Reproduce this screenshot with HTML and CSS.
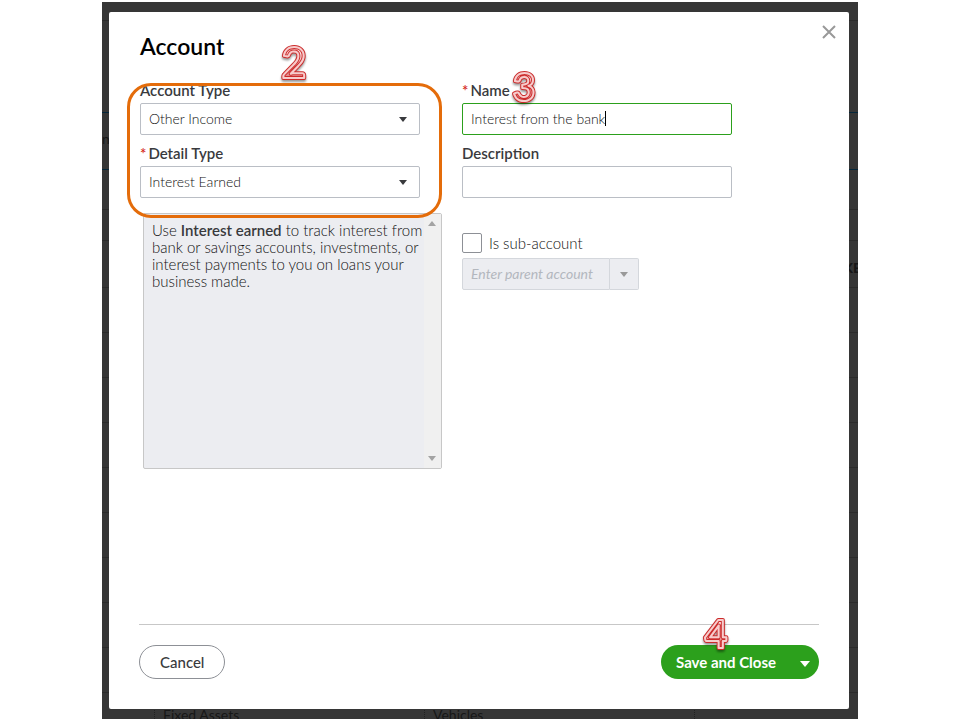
FILE: index.html
```html
<!DOCTYPE html>
<html lang="en">
<head>
<meta charset="utf-8">
<title>Account</title>
<link rel="stylesheet" href="styles.css">
</head>
<body>
<main class="stage">
  <div class="backdrop">
    <div class="row row-xs"></div>
    <div class="row row-xl blue"></div>
    <div class="row row-lg blue edge"><span>n</span></div>
    <div class="row row-md"></div>
    <div class="row row-sm"></div>
    <div class="row heading"><b>KE</b></div>
    <div class="row"></div>
    <div class="row"></div>
    <div class="row"></div>
    <div class="row"></div>
    <div class="row"></div>
    <div class="row"></div>
    <div class="row"></div>
    <div class="row"></div>
    <div class="row"></div>
    <div class="row cells"><span></span><span>Fixed Assets</span><span>Vehicles</span><span></span></div>
  </div>
  <form class="modal" role="dialog" aria-labelledby="title">
    <header class="modal-head">
      <h1 id="title">Account</h1>
      <span class="step step-2"><svg viewBox="0 0 40 52" aria-hidden="true"><defs><linearGradient id="ink" x1="0" y1="0" x2="0" y2="1"><stop offset="0.3" stop-color="#fde4e4"/><stop offset="1" stop-color="#d86060"/></linearGradient></defs><text class="outer" x="20" y="40">2</text><text class="inner" x="20" y="40">2</text></svg></span>
      <button class="close" type="button" aria-label="Close"><svg viewBox="0 0 14 14"><path d="M1 1l12 12M13 1L1 13"/></svg></button>
    </header>
    <div class="fields">
      <div class="column">
        <div class="types">
          <div class="field">
            <label for="type">Account Type</label>
            <span class="picker"><select id="type"><option>Other Income</option></select></span>
          </div>
          <div class="field">
            <label for="detail"><i>*</i>Detail Type</label>
            <span class="picker"><select id="detail"><option>Interest Earned</option></select></span>
          </div>
        </div>
        <div class="note">
          <p>Use <b>Interest earned</b> to track interest from bank or savings accounts, investments, or interest payments to you on loans your business made.</p>
          <div class="scroll"><svg viewBox="0 0 8 5"><path d="M0 5l4-5 4 5z"/></svg><svg viewBox="0 0 8 5"><path d="M0 0h8L4 5z"/></svg></div>
        </div>
      </div>
      <div class="column">
        <div class="field">
          <label for="name"><i>*</i>Name</label>
          <span class="entry"><input class="focused" id="name" type="text" value="Interest from the bank"><span class="caret"></span></span>
          <span class="step step-3"><svg viewBox="0 0 40 52" aria-hidden="true"><text class="outer" x="20" y="40">3</text><text class="inner" x="20" y="40">3</text></svg></span>
        </div>
        <div class="field">
          <label for="description">Description</label>
          <input id="description" type="text">
        </div>
        <label class="check"><input type="checkbox">Is sub-account</label>
        <div class="parent">
          <input type="text" placeholder="Enter parent account" aria-label="Parent account" disabled>
          <button type="button" aria-label="Choose parent account" disabled><svg viewBox="0 0 8 5"><path d="M0 0h8L4 5z"/></svg></button>
        </div>
      </div>
    </div>
    <footer class="modal-foot">
      <button class="cancel" type="button">Cancel</button>
      <div class="save">
        <button type="button">Save and Close</button>
        <button class="more" type="button" aria-label="More save options"><svg viewBox="0 0 10 6"><path d="M0 0h10L5 6z"/></svg></button>
        <span class="step step-4"><svg viewBox="0 0 40 52" aria-hidden="true"><text class="outer" x="20" y="40">4</text><text class="inner" x="20" y="40">4</text></svg></span>
      </div>
    </footer>
  </form>
</main>
</body>
</html>
```
FILE: styles.css
```css
* { box-sizing: border-box; }

body {
  margin: 0;
  min-height: 100vh;
  padding: 2px 0 1px;
  display: flex;
  justify-content: center;
  background: #fff;
  color: #393a3d;
  font: 14px/18px Lato, "Liberation Sans", sans-serif;
}

button, input, select { font: inherit; color: inherit; margin: 0; }
svg { display: block; fill: currentColor; }

.stage {
  flex: 1;
  max-width: 756px;
  display: grid;
  grid-template: minmax(0, 1fr) / minmax(0, 1fr);
  background: #363636;
}

.backdrop, .modal { grid-area: 1 / 1; }

/* Dimmed page behind the dialog */
.backdrop {
  height: 0;
  min-height: 100%;
  overflow: hidden;
  color: #171717;
}
.row { height: 45px; border-bottom: 1px solid #2b2b2b; overflow: hidden; }
.row-xs { height: 19px; }
.row-xl { height: 92px; }
.row-lg { height: 57px; }
.row-md { height: 40px; }
.row-sm { height: 31px; }
.blue { border-color: #04263a; }
.edge { padding-top: 16px; line-height: 20px; }
.heading { height: 47px; padding: 18px 0 0; text-align: right; }
.heading b { margin-right: -3px; font-weight: 900; }
.cells { display: grid; grid-template-columns: 53px 270px 270px 1fr; }
.cells span { padding: 13px 8px; border-right: 1px dotted #222; }
.cells span:last-child { border: 0; }

.modal {
  margin: 10px 9px 10px 7px;
  padding: 20px 30px 30px;
  display: flex;
  flex-direction: column;
  background: #fff;
  border-radius: 2px;
}

.modal-head { position: relative; padding-left: 1px; }
h1 { margin: 0; font-size: 23px; line-height: 28px; font-weight: 600; color: #000; }
.close {
  position: absolute;
  top: -7px;
  right: -17px;
  padding: 0;
  border: 0;
  background: none;
}
.close svg { width: 14px; height: 14px; fill: none; stroke: #999; stroke-width: 2; }

.fields {
  flex: 1;
  padding: 21px 0 0 1px;
  display: grid;
  grid-template-columns: 280px 270px;
  gap: 42px;
}
.column { min-width: 0; }
.field { position: relative; margin-bottom: 9px; }
.field label { display: block; height: 22px; font-size: 15px; font-weight: 600; line-height: 18px; }
.field i { margin-right: 2px; color: #d52b1e; font-style: normal; }

input[type="text"], select {
  display: block;
  width: 100%;
  height: 32px;
  padding: 0 8px;
  border: 1px solid #babec5;
  border-radius: 2px;
  background: #fff;
  outline: 0;
  color: #111;
  font-weight: 300;
}
input[type="text"] { padding-bottom: 2px; }
select { appearance: none; }
.picker { display: block; position: relative; }
.picker::after {
  content: "";
  position: absolute;
  top: 14px;
  right: 13px;
  border: solid transparent;
  border-width: 5px 4px 0;
  border-top-color: #393a3d;
}
input[type="text"].focused { border-color: #2ca01c; }
.entry { display: block; position: relative; }
.caret { position: absolute; left: 143px; top: 8px; width: 1px; height: 15px; background: #000; }

/* Highlight ring around the two type fields */
.types { position: relative; }
.types::after {
  content: "";
  position: absolute;
  inset: 2px -22px -20px -13px;
  border: 3px solid #e46c0a;
  border-radius: 24px;
  pointer-events: none;
}

.note {
  margin: 15px -22px 0 3px;
  height: 256px;
  display: flex;
  border: 1px solid #c7c7c7;
  border-radius: 2px;
  background: #ecedf1;
}
.note p { flex: 1; margin: 0; padding: 8px 0 8px 8px; color: #111; font-size: 15px; font-weight: 300; line-height: 17px; }
.note b { color: #393a3d; font-weight: 600; }
.scroll {
  width: 17px;
  padding: 7px 4px;
  display: flex;
  flex-direction: column;
  justify-content: space-between;
  background: #f0f0f0;
  color: #a3a3a3;
}
.scroll svg { width: 8px; height: 5px; }

.check { display: flex; align-items: center; gap: 7px; margin-top: 35px; color: #111; font-size: 15px; font-weight: 300; line-height: 20px; }
.check input {
  appearance: none;
  width: 20px;
  height: 20px;
  border: 1px solid #8d9096;
  border-radius: 2px;
  background: #fff;
}
.parent { display: flex; width: 177px; margin-top: 5px; }
.parent input[type="text"] { flex: 1; min-width: 0; border-color: #d4d7dc; border-radius: 2px 0 0 2px; background: #ecedf1; font-weight: 400; }
.parent input::placeholder { color: #b3b7be; font-style: italic; opacity: 1; }
.parent button {
  width: 29px;
  padding: 0 10px;
  border: 1px solid #d4d7dc;
  border-left: 0;
  border-radius: 0 2px 2px 0;
  background: #ecedf1;
  color: #999;
}
.parent svg { width: 8px; height: 5px; }

.modal-foot {
  padding-top: 20px;
  display: flex;
  justify-content: space-between;
  border-top: 1px solid #c7c7c7;
  font-size: 15px;
}
.cancel { height: 34px; padding: 0 20px; border: 1px solid #8d9096; border-radius: 17px; background: #fff; font-weight: 500; }
.save { position: relative; display: flex; }
.save button { height: 34px; padding: 0 15px; border: 0; border-radius: 17px 0 0 17px; background: #2ca01c; color: #fff; font-weight: 700; }
.save .more { padding: 4px 9px 0; border-radius: 0 17px 17px 0; }
.more svg { width: 10px; height: 6px; }

/* Numbered step markers */
.step { position: absolute; width: 40px; height: 52px; filter: drop-shadow(0 2px 1px #0006); pointer-events: none; }
.step-2 { left: 135px; top: 6px; }
.step-3 { left: 42px; top: -20px; }
.step-4 { left: 35px; top: -37px; }
.step text { font: 700 42px Lato, sans-serif; text-anchor: middle; stroke-linejoin: round; }
.step-3 text, .step-4 text { font-size: 39px; }
.outer { fill: url(#ink); stroke: #cc2b2b; stroke-width: 4; }
.inner { fill: none; stroke: #f7cccc; stroke-width: 2; }
```
